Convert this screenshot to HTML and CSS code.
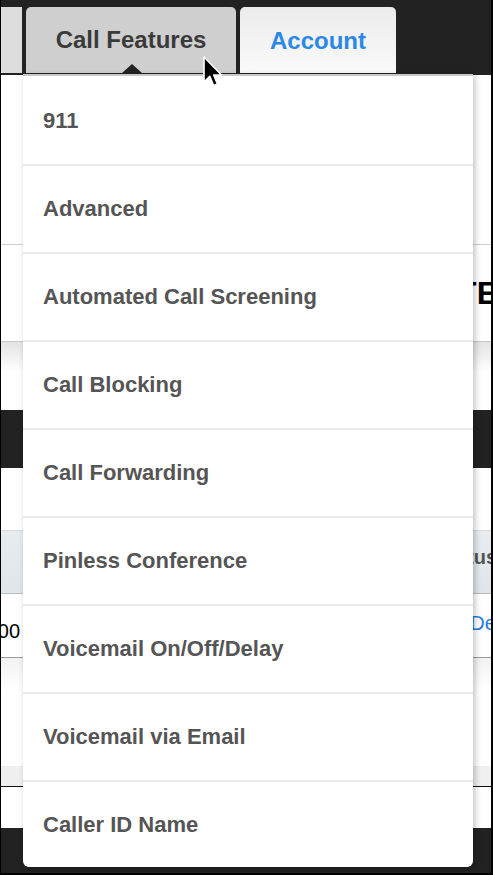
FILE: index.html
```html
<!DOCTYPE html>
<html lang="en">
<head>
  <meta charset="UTF-8" />
  <meta name="viewport" content="width=device-width, initial-scale=1" />
  <title>Call Features</title>
  <link rel="stylesheet" href="styles.css">
</head>
<body>
  <div class="frame">
    <!-- Top tabs -->
    <nav class="topbar">
      <a href="#" class="tab tab-edge"></a>
      <a href="#" class="tab tab-active">Call Features<span class="caret"></span></a>
      <a href="#" class="tab tab-link">Account</a>
    </nav>

    <!-- Page content behind the menu -->
    <div class="intro"></div>
    <div class="title-row"><h1 class="page-title">UPDATE</h1></div>
    <div class="fade"></div>
    <div class="band"></div>
    <div class="spacer"></div>
    <div class="table-head"><span class="head-cell">Status</span></div>
    <div class="table-row">
      <span class="amount">$0.00</span>
      <a href="#" class="row-link">Delete</a>
    </div>
    <div class="gap"></div>
    <div class="foot-band"></div>
    <div class="foot-white"></div>
    <div class="bottombar"></div>

    <!-- Dropdown menu -->
    <ul class="menu">
      <li><a href="#">911</a></li>
      <li><a href="#">Advanced</a></li>
      <li><a href="#">Automated Call Screening</a></li>
      <li><a href="#">Call Blocking</a></li>
      <li><a href="#">Call Forwarding</a></li>
      <li><a href="#">Pinless Conference</a></li>
      <li><a href="#">Voicemail On/Off/Delay</a></li>
      <li><a href="#">Voicemail via Email</a></li>
      <li><a href="#">Caller ID Name</a></li>
    </ul>

    <!-- Mouse pointer -->
    <svg class="pointer" width="22" height="34" viewBox="0 0 22 34">
      <path d="M2 2 L2 27 L7.8 21.4 L11.6 30.5 L15.4 28.9 L11.7 20 L19.5 20 Z" fill="#000" stroke="#fff" stroke-width="1.6" stroke-linejoin="round" />
    </svg>
  </div>
</body>
</html>
```

FILE: styles.css
```css
* {
  box-sizing: border-box;
}

body {
  margin: 0;
  font-family: 'Liberation Sans', Arial, sans-serif;
  background: #222;
}

.frame {
  position: relative;
  width: 493px;
  height: 875px;
  overflow: hidden;
  display: flex;
  flex-direction: column;
  background: #fff;
  border-left: 1px solid #000;
  border-right: 2px solid #000;
  border-bottom: 2px solid #000;
}

/* tabs */
.topbar {
  height: 75px;
  flex-shrink: 0;
  display: flex;
  gap: 4px;
  padding: 7px 0 2px;
  background: #222;
  margin-left: -1px;
}

.tab {
  position: relative;
  height: 66px;
  display: flex;
  align-items: center;
  justify-content: center;
  border-radius: 5px 5px 0 0;
  font-size: 24px;
  font-weight: 700;
  text-decoration: none;
}

.tab-edge {
  width: 22px;
  background: #dcdcdc;
  border-radius: 0;
}

.tab-active {
  width: 210px;
  background: #cfcfcf;
  color: #3a3a3a;
}

.tab-link {
  width: 156px;
  padding-top: 2px;
  background: linear-gradient(#ebebeb, #fafafa);
  color: #2a88e6;
}

.caret {
  position: absolute;
  bottom: 0;
  left: 96px;
  width: 0;
  height: 0;
  border-left: 10px solid transparent;
  border-right: 10px solid transparent;
  border-bottom: 9px solid #222;
}

/* background page */
.intro {
  height: 170px;
  border-bottom: 1px solid #cfcfcf;
}

.title-row {
  height: 97px;
  display: flex;
  align-items: center;
  justify-content: flex-end;
  border-bottom: 1px solid #c8c8c8;
}

.page-title {
  flex-shrink: 0;
  margin: 0 -7px 0 0;
  font-size: 32px;
  font-weight: 700;
  color: #000;
}

.fade {
  height: 68px;
  background: linear-gradient(#e4e4e4, #fff 45%);
}

.band {
  height: 58px;
  background: #222;
}

.spacer {
  height: 62px;
}

.table-head {
  height: 64px;
  display: flex;
  align-items: center;
  justify-content: flex-end;
  padding-bottom: 10px;
  background: linear-gradient(#e8ecef, #dfe5e9);
  border-top: 1px solid #d5dbe0;
  border-bottom: 1px solid #b9bec2;
}

.head-cell {
  flex-shrink: 0;
  margin-right: -6px;
  font-size: 20px;
  font-weight: 700;
  color: #555;
}

.table-row {
  height: 64px;
  display: flex;
  justify-content: space-between;
  align-items: center;
  border-bottom: 1px solid #9a9a9a;
}

.amount {
  flex-shrink: 0;
  margin: 12px 0 0 -31px;
  font-size: 20px;
  color: #000;
}

.row-link {
  flex-shrink: 0;
  margin: -4px -37px 0 0;
  font-size: 20px;
  color: #2a7ae2;
  text-decoration: none;
}

.gap {
  height: 108px;
  background: linear-gradient(#f2f2f2, #fff 30%);
}

.foot-band {
  height: 21px;
  background: #efefef;
  border-bottom: 1px solid #111;
}

.foot-white {
  height: 41px;
}

.bottombar {
  flex: 1;
  background: #222;
}

/* dropdown */
.menu {
  position: absolute;
  top: 74px;
  left: 22px;
  width: 450px;
  margin: 0;
  padding: 0;
  list-style: none;
  background: #fff;
  border-top: 2px solid #c8c8c8;
  border-radius: 0 0 6px 6px;
  box-shadow: 2px 2px 6px rgba(0, 0, 0, 0.25);
}

.menu li {
  height: 88px;
  border-bottom: 2px solid #ececec;
}

.menu li:first-child {
  height: 90px;
}

.menu li:last-child {
  height: 85px;
  border-bottom: none;
}

.menu a {
  display: flex;
  align-items: center;
  height: 100%;
  padding-left: 20px;
  font-size: 22px;
  font-weight: 700;
  color: #555;
  text-decoration: none;
}

.menu li:first-child a {
  padding-top: 2px;
}

.pointer {
  position: absolute;
  top: 55px;
  left: 201px;
}
```
